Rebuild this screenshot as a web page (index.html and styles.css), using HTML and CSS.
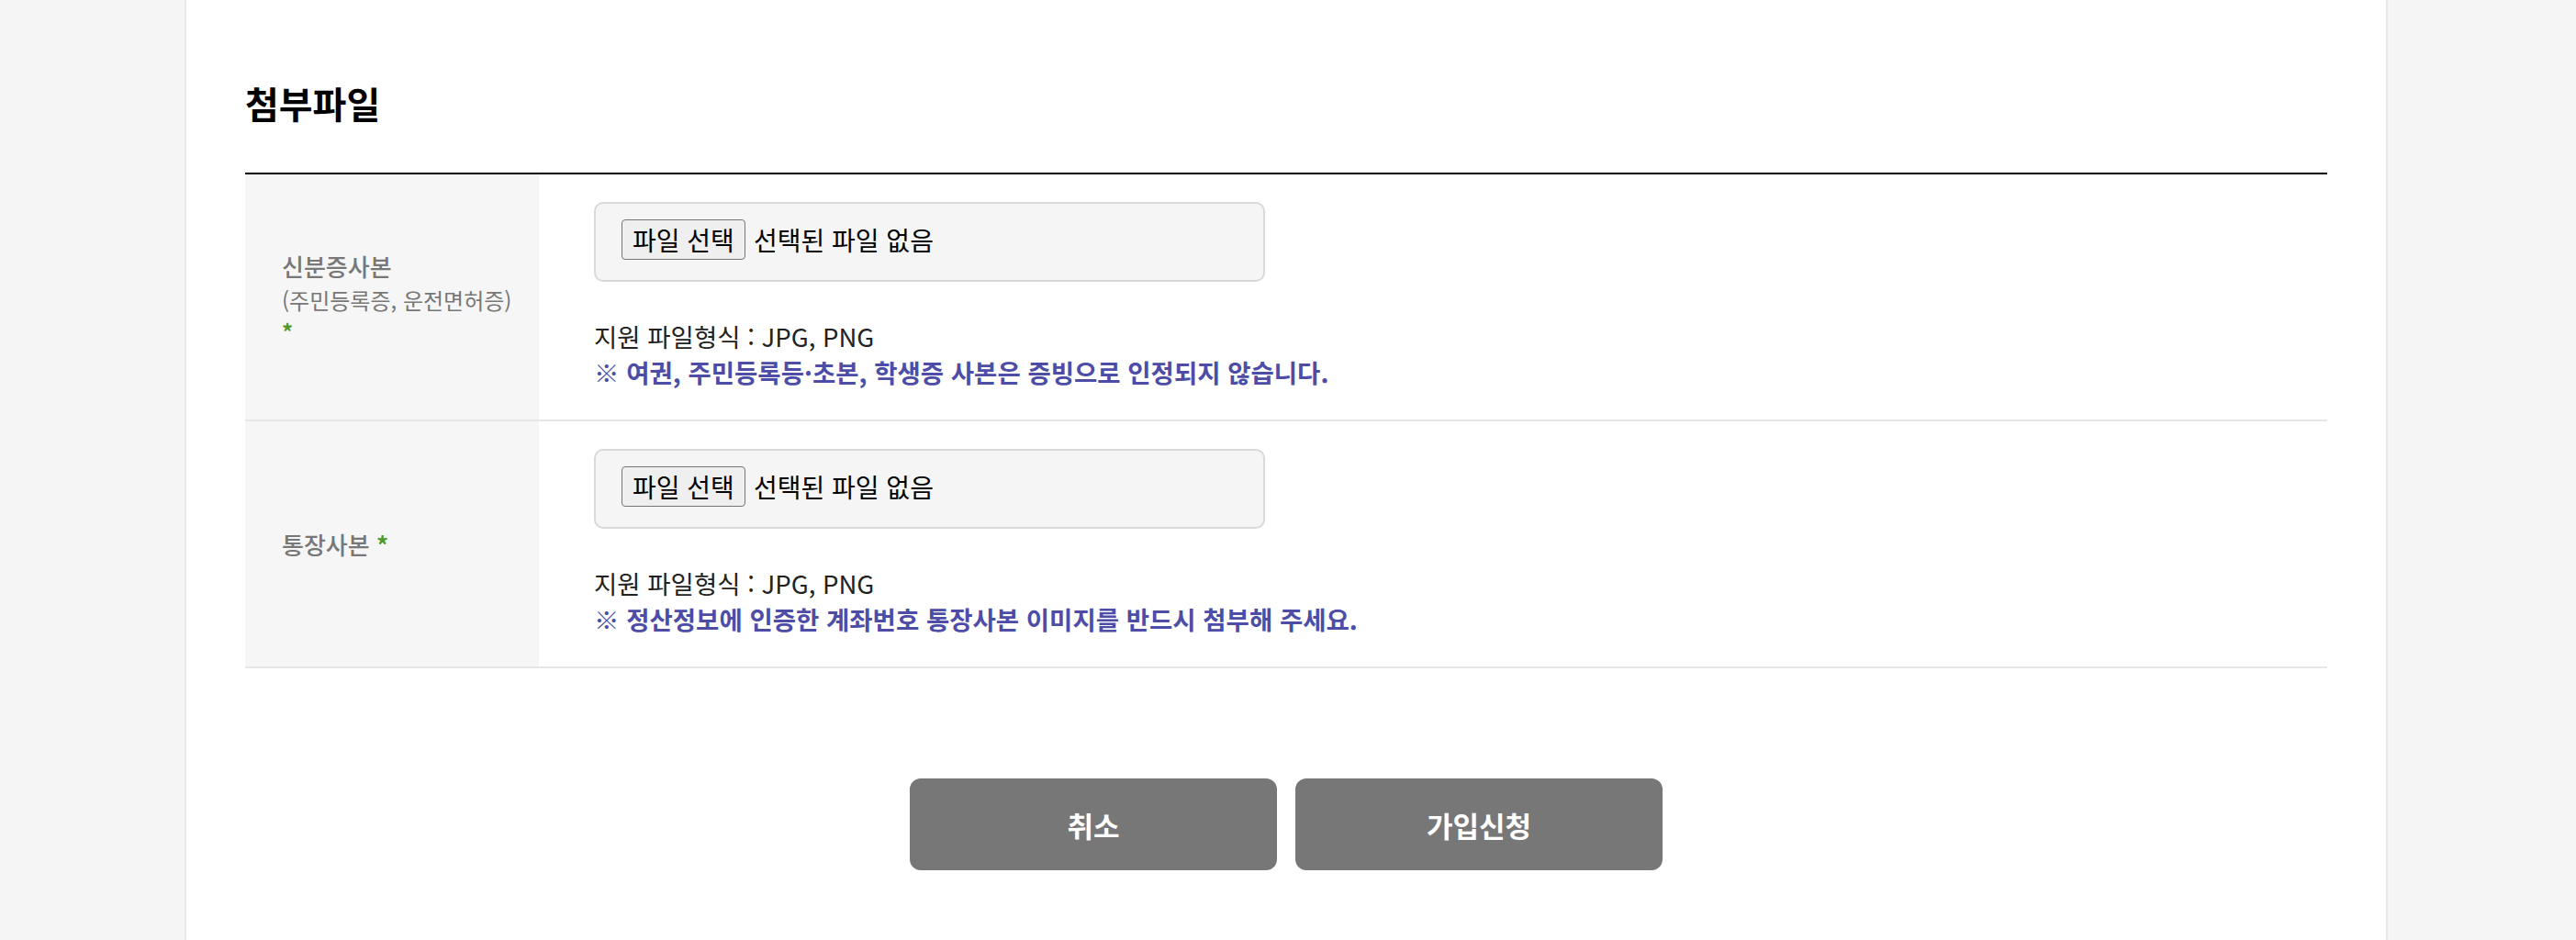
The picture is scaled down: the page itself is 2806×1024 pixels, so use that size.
FILE: index.html
```html
<!DOCTYPE html>
<html lang="ko">
<head>
  <meta charset="UTF-8">
  <meta name="viewport" content="width=device-width, initial-scale=1.0">
  <title>가입신청 - 첨부파일</title>
  <link rel="stylesheet" href="styles.css">
</head>
<body>
  <div class="join-card">
    <h2 class="section-title">첨부파일</h2>

    <table class="attach-table">
      <tr>
        <th>
          <span class="th-main">신분증사본</span>
          <span class="th-sub">(주민등록증, 운전면허증)</span>
          <em class="required">*</em>
        </th>
        <td>
          <label class="file-box">
            <input type="file" accept=".jpg,.png" hidden>
            <span class="file-btn">파일 선택</span>
            <span class="file-name">선택된 파일 없음</span>
          </label>
          <p class="file-help">
            지원 파일형식 : JPG, PNG<br>
            <strong class="file-notice">※ 여권, 주민등록등·초본, 학생증 사본은 증빙으로 인정되지 않습니다.</strong>
          </p>
        </td>
      </tr>
      <tr>
        <th>
          <span class="th-main">통장사본 <em class="required">*</em></span>
        </th>
        <td>
          <label class="file-box">
            <input type="file" accept=".jpg,.png" hidden>
            <span class="file-btn">파일 선택</span>
            <span class="file-name">선택된 파일 없음</span>
          </label>
          <p class="file-help">
            지원 파일형식 : JPG, PNG<br>
            <strong class="file-notice">※ 정산정보에 인증한 계좌번호 통장사본 이미지를 반드시 첨부해 주세요.</strong>
          </p>
        </td>
      </tr>
    </table>

    <div class="btn-area">
      <button type="button" class="btn-gray">취소</button>
      <button type="submit" class="btn-gray">가입신청</button>
    </div>
  </div>
</body>
</html>
```

FILE: styles.css
```css
:root {
  --page-bg: #f5f5f5;
  --line-gray: #e6e6e6;
  --label-gray: #777777;
  --notice-blue: #4d4da8;
  --required-green: #4f9a2b;
}

body {
  margin: 0;
  padding-right: 4px;
  background-color: var(--page-bg);
  font-family: "Noto Sans CJK KR", "Noto Sans", sans-serif;
  color: #222;
}

.join-card {
  width: 2268px;
  margin: 0 auto;
  padding: 86px 64px 100px;
  background-color: #fff;
  border-left: 2px solid #e8e8e8;
  border-right: 2px solid #e8e8e8;
}

.section-title {
  margin: 0 0 49px;
  font-size: 40px;
  line-height: 53px;
  font-weight: 700;
  color: #000;
}

.attach-table {
  width: 100%;
  border-collapse: collapse;
  border-top: 2px solid #000;
}

.attach-table th {
  width: 270px;
  padding: 0 10px 0 40px;
  background-color: #f6f6f6;
  border-bottom: 2px solid var(--line-gray);
  text-align: left;
  vertical-align: middle;
  font-size: 24px;
  line-height: 32px;
  font-weight: 400;
  color: var(--label-gray);
}

.attach-table td {
  padding: 30px 60px 32px;
  border-bottom: 2px solid var(--line-gray);
}

.th-main {
  display: block;
  font-size: 26px;
  line-height: 38px;
  font-weight: 500;
}

.th-sub {
  display: block;
  font-size: 24px;
  line-height: 36px;
  white-space: nowrap;
}

.required {
  font-style: normal;
  font-weight: 700;
  color: var(--required-green);
}

.file-box {
  display: flex;
  align-items: center;
  gap: 9px;
  box-sizing: border-box;
  width: 731px;
  height: 87px;
  padding: 0 28px 6px;
  background-color: #f5f5f5;
  border: 2px solid #d9d9d9;
  border-radius: 10px;
  cursor: pointer;
}

.file-btn {
  box-sizing: border-box;
  height: 44px;
  padding: 0 11px;
  background-color: #efefef;
  border: 1px solid #767676;
  border-radius: 4px;
  font-size: 28px;
  line-height: 42px;
  color: #000;
}

.file-name {
  font-size: 28px;
  color: #000;
}

.file-help {
  margin: 40px 0 0;
  font-size: 27.5px;
  line-height: 39px;
  color: #222;
}

.file-notice {
  font-weight: 700;
  color: var(--notice-blue);
}

.btn-area {
  display: flex;
  justify-content: center;
  gap: 20px;
  margin-top: 120px;
}

.btn-gray {
  width: 400px;
  height: 100px;
  border: none;
  border-radius: 12px;
  background-color: #777;
  color: #fff;
  font-family: inherit;
  font-size: 31px;
  font-weight: 700;
  cursor: pointer;
}

.btn-gray:hover {
  background-color: #666;
}
```
